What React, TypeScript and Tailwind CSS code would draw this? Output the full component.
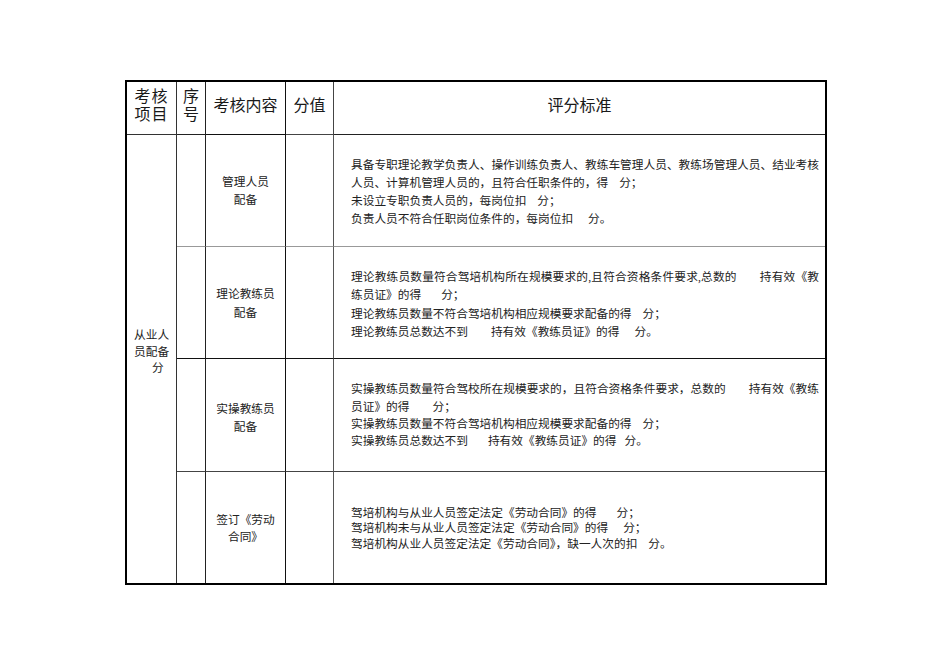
import React from 'react';

const FONT = '[font-family:"Liberation_Serif","Noto_Sans_CJK_SC",serif]';

function Gap({ w }: { w: 'a' | 'b' | 'c' | 'd' | 'e' }) {
  // spacer blanks where the score is left empty in the form
  const cls = {
    a: 'inline-block w-[8px]',
    b: 'inline-block w-[11px]',
    c: 'inline-block w-[15px]',
    d: 'inline-block w-[20px]',
    e: 'inline-block w-[23px]',
  }[w];
  return <span className={cls} />;
}

export default function App() {
  const head = 'flex items-center justify-center pb-[4px] text-center text-[16px] leading-[18px] text-[#1a1a1a]';
  const item = 'flex items-center justify-center text-center text-[11.7px] text-[#222]';
  const body = 'flex flex-col justify-center pl-[17px] text-[11.7px] text-[#222]';
  const full = 'w-[468px] whitespace-nowrap [text-align-last:justify] text-justify';

  return (
    <div className={`h-[672px] w-[950px] bg-white pl-[125px] pt-[80px] ${FONT}`}>
      <div className="grid w-[702px] grid-cols-[50px_29px_80px_48px_491px] grid-rows-[53px_112px_112px_113px_111px] border-2 border-black">
        {/* Header */}
        <div className={`${head} border-b border-r border-[#333] tracking-[1px]`}>考核<br />项目</div>
        <div className={`${head} border-b border-r border-[#222]`}>序<br />号</div>
        <div className={`${head} border-b border-r border-[#111]`}>考核内容</div>
        <div className={`${head} border-b border-r border-[#444]`}>分值</div>
        <div className={`${head} border-b border-[#222]`}>评分标准</div>

        {/* Left merged column */}
        <div className="row-span-4 flex flex-col justify-center border-r border-[#333] pb-[12px] pl-[7px] text-[11.7px] leading-[16.7px] text-[#222]">
          <div>从业人</div>
          <div>员配备</div>
          <div className="pl-[18px]">分</div>
        </div>

        {/* Row 1 */}
        <div className="border-b border-r border-b-[#999] border-r-[#222]" />
        <div className={`${item} flex-col border-b border-r border-b-[#999] border-r-[#111] pt-[3px] leading-[18px]`}>
          <div>管理人员</div>
          <div>配备</div>
        </div>
        <div className="border-b border-r border-b-[#999] border-r-[#555]" />
        <div className={`${body} border-b border-[#999] pt-[5px] leading-[18.2px]`}>
          <div className={full}>具备专职理论教学负责人、操作训练负责人、教练车管理人员、教练场管理人员、结业考核</div>
          <div>人员、计算机管理人员的，且符合任职条件的，得<Gap w="b" />分；</div>
          <div>未设立专职负责人员的，每岗位扣<Gap w="b" />分；</div>
          <div>负责人员不符合任职岗位条件的，每岗位扣<Gap w="c" />分。</div>
        </div>

        {/* Row 2 */}
        <div className="border-b border-r border-b-[#111] border-r-[#222]" />
        <div className={`${item} flex-col border-b border-r border-[#111] pt-[3px] leading-[19px]`}>
          <div>理论教练员</div>
          <div>配备</div>
        </div>
        <div className="border-b border-r border-b-[#111] border-r-[#555]" />
        <div className={`${body} border-b border-[#111] pt-[6px] leading-[18.1px]`}>
          <div className={full}>理论教练员数量符合驾培机构所在规模要求的,且符合资格条件要求,总数的<Gap w="e" />持有效《教</div>
          <div>练员证》的得<Gap w="d" />分；</div>
          <div>理论教练员数量不符合驾培机构相应规模要求配备的得<Gap w="b" />分；</div>
          <div>理论教练员总数达不到<Gap w="e" />持有效《教练员证》的得<Gap w="c" />分。</div>
        </div>

        {/* Row 3 */}
        <div className="border-b border-r border-b-[#444] border-r-[#222]" />
        <div className={`${item} flex-col border-b border-r border-b-[#444] border-r-[#111] pt-[8px] leading-[18.5px]`}>
          <div>实操教练员</div>
          <div>配备</div>
        </div>
        <div className="border-b border-r border-b-[#444] border-r-[#555]" />
        <div className={`${body} border-b border-[#444] pt-[2px] leading-[17.3px]`}>
          <div className={full}>实操教练员数量符合驾校所在规模要求的，且符合资格条件要求，总数的<Gap w="e" />持有效《教练</div>
          <div>员证》的得<Gap w="e" />分；</div>
          <div>实操教练员数量不符合驾培机构相应规模要求配备的得<Gap w="b" />分；</div>
          <div>实操教练员总数达不到<Gap w="d" />持有效《教练员证》的得<Gap w="a" />分。</div>
        </div>

        {/* Row 4 */}
        <div className="border-r border-[#222]" />
        <div className={`${item} flex-col border-r border-[#111] pt-[2px] leading-[17px]`}>
          <div>签订《劳动</div>
          <div>合同》</div>
        </div>
        <div className="border-r border-[#555]" />
        <div className={`${body} pt-[3px] leading-[15.5px]`}>
          <div>驾培机构与从业人员签定法定《劳动合同》的得<Gap w="d" />分；</div>
          <div>驾培机构未与从业人员签定法定《劳动合同》的得<Gap w="c" />分；</div>
          <div>驾培机构从业人员签定法定《劳动合同》，缺一人次的扣<Gap w="b" />分。</div>
        </div>
      </div>
    </div>
  );
}
